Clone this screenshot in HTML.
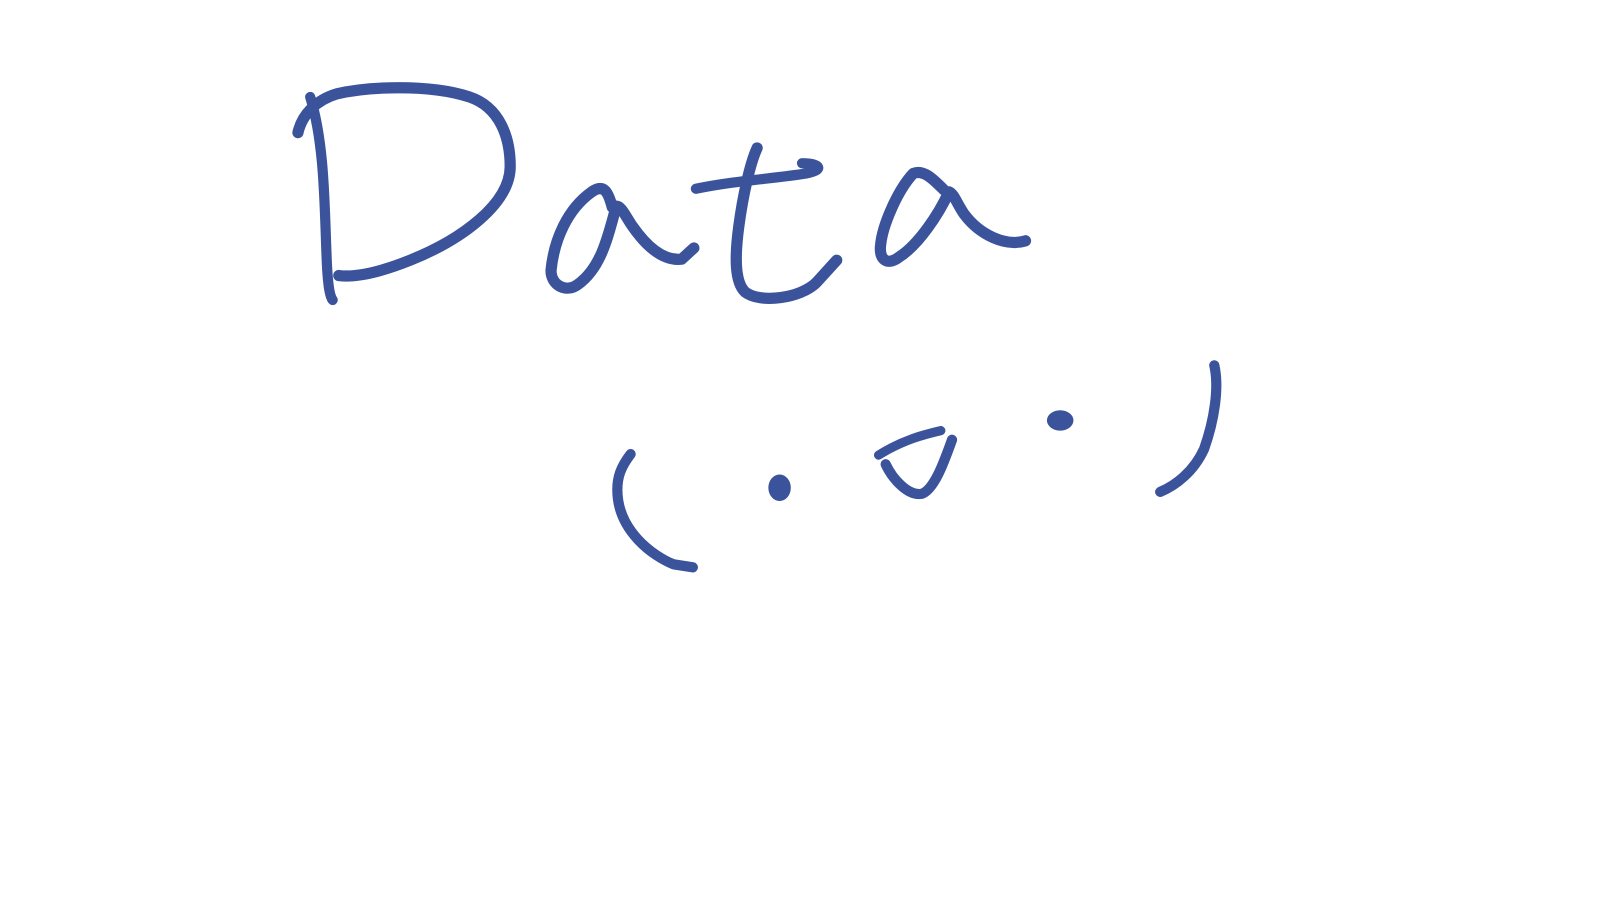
<!DOCTYPE html>
<html><head><meta charset="utf-8"><style>
html,body{margin:0;padding:0;background:#fff;width:1600px;height:900px;overflow:hidden}
svg{display:block}
</style></head><body>
<svg width="1600" height="900" viewBox="0 0 1600 900" xmlns="http://www.w3.org/2000/svg">
<g transform="scale(1.0204)">
<g fill="none" stroke="#3a539b" stroke-linecap="round" stroke-linejoin="round">
<path stroke-width="10" d="M304,95 C318,140 318,200 320,250 C321,278 323,290 326,294"/>
<path stroke-width="11" d="M292,130 C296,112 310,98 330,92 C360,85 420,82 460,95 C490,105 500,135 500,163 C500,200 452,235 402,255 C372,267 348,272 332,270"/>
<path stroke-width="11" d="M600,203 C596,188 592,180 580,188 C556,205 543,235 540,265 C540,280 555,287 566,279 C590,262 596,230 604,202 C609,202 613,212 620,222 C634,242 650,256 668,254 L680,243"/>
<path stroke-width="11" d="M742,145 C735,160 728,192 724,222 C720,252 720,276 730,286 C745,298 785,292 800,277 L820,255"/>
<path stroke-width="10" d="M682,185 C720,177 760,175 790,170 C810,166 802,160 786,160"/>
<path stroke-width="11" d="M925,186 C914,175 905,166 895,170 C880,186 865,220 863,240 C861,256 871,260 881,252 C900,240 920,210 930,188 C935,190 938,200 945,210 C960,230 985,242 1005,236"/>
<path stroke-width="10" d="M618,445 C608,458 605,468 605,480 C605,520 640,545 660,553 L679,556"/>
<path stroke-width="10" d="M868,455 C875,470 890,486 903,484 C916,480 926,450 933,431"/>
<path stroke-width="9" d="M861,446 C885,431 905,426 922,422"/>
<path stroke-width="10" d="M1137,482 C1152,476 1170,462 1180,440 C1190,412 1195,380 1190,358"/>
</g>
<g fill="#3a539b">
<ellipse cx="764" cy="478" rx="11" ry="13"/>
<ellipse cx="1039" cy="412" rx="13" ry="10"/>
</g>
</g>
</svg>
</body></html>
